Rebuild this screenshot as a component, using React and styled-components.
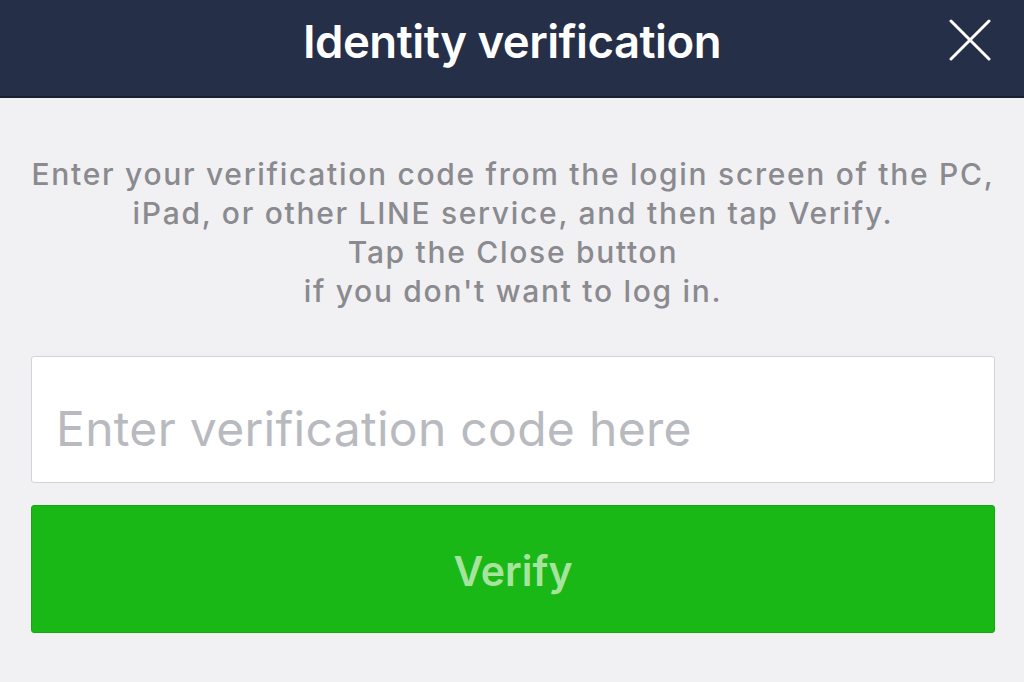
import styled, { createGlobalStyle } from "styled-components";

const GlobalStyle = createGlobalStyle`
 html, body {
  margin: 0;
  padding: 0;
  background: #f1f1f4;
 }
 body {
  font-family: Inter, "Liberation Sans", sans-serif;
 }
`;

const Page = styled.div`
 width: 1024px;
 height: 682px;
 display: flex;
 flex-direction: column;
 background: #f1f1f4;
 overflow: hidden;
`;

const Header = styled.header`
 height: 96px;
 flex-shrink: 0;
 background: #262f48;
 border-bottom: 2px solid #1a2033;
 display: grid;
 grid-template-columns: 1fr auto 1fr;
 align-items: center;
 padding: 0 32px;
`;

const Title = styled.h1`
 grid-column: 2;
 margin: 0;
 color: #fff;
 font-size: 45.5px;
 font-weight: 600;
 letter-spacing: -0.5px;
 padding-bottom: 14px;
`;

const CloseButton = styled.button`
 grid-column: 3;
 justify-self: end;
 border: 0;
 background: none;
 padding: 0;
 margin-right: 1px;
 margin-bottom: 17px;
 display: flex;
 cursor: pointer;
`;

const Content = styled.main`
 display: flex;
 flex-direction: column;
 padding: 57px 29px 0 31px;
`;

const Message = styled.p`
 margin: 0 0 45px;
 text-align: center;
 color: #8a8a8f;
 font-size: 30px;
 font-weight: 500;
 line-height: 39px;
 letter-spacing: 1.7px;
`;

const CodeInput = styled.input`
 height: 127px;
 box-sizing: border-box;
 border: 1px solid #d2d3d8;
 border-radius: 3px;
 background: #fff;
 padding: 18px 24px 0;
 font-family: inherit;
 font-size: 48px;
 letter-spacing: 0.3px;
 color: #333;
 outline: none;

 &::placeholder {
  color: #b8bac0;
 }
`;

const VerifyButton = styled.button`
 margin-top: 22px;
 height: 128px;
 border: 1px solid #16a814;
 border-radius: 3px;
 background: #19b817;
 color: #a6e49e;
 font-family: inherit;
 font-size: 41px;
 font-weight: 600;
 padding-top: 4px;
 cursor: pointer;
`;

export default function App() {
 return (
  <Page>
   <GlobalStyle />
   <Header>
    <Title>Identity verification</Title>
    <CloseButton aria-label='Close'>
     <svg width='42' height='42' viewBox='0 0 42 42'>
      <path
       d='M2 2L40 40M40 2L2 40'
       stroke='#fff'
       strokeWidth='3'
       strokeLinecap='round'
      />
     </svg>
    </CloseButton>
   </Header>
   <Content>
    <Message>
     Enter your verification code from the login screen of the PC,
     <br />
     iPad, or other LINE service, and then tap Verify.
     <br />
     Tap the Close button
     <br />
     if you don't want to log in.
    </Message>
    <CodeInput placeholder='Enter verification code here' />
    <VerifyButton>Verify</VerifyButton>
   </Content>
  </Page>
 );
}
